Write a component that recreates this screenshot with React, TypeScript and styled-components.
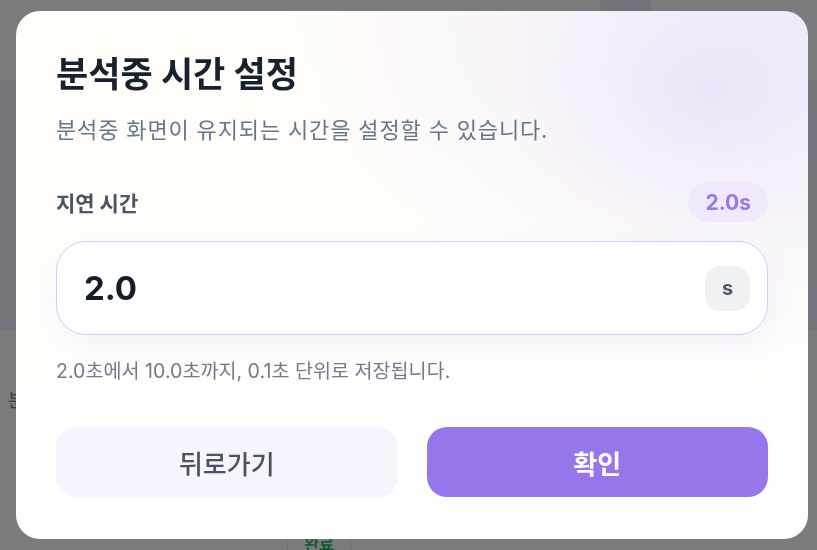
import * as React from 'react'
import styled, { createGlobalStyle } from 'styled-components'

const GlobalStyle = createGlobalStyle`
  html, body {
    margin: 0;
    padding: 0;
    width: 100%;
    height: 100%;
    overflow: hidden;
  }
  body {
    font-family: Inter, "Noto Sans CJK KR", "Noto Sans", sans-serif;
    background: #7b7b7b;
  }
`

// dimmed page behind the dialog
const Page = styled.div`
  display: grid;
  grid-template-rows: 80px 250px 1fr;
  height: 550px;
  width: 817px;
`
const TopBand = styled.div`
  display: grid;
  grid-template-columns: 600px 50px 1fr;
  & > div:nth-child(1) { background: #7b7b7b; }
  & > div:nth-child(2) { background: #747279; }
  & > div:nth-child(3) { background: #7b7b7b; }
`
const MidBand = styled.div`
  background: #76757c;
`
const LowBand = styled.div`
  position: relative;
  background: #7b7b7b;
  padding: 56px 0 0 8px;
  color: #3b3d44;
  font-size: 18px;
`
const StatusCell = styled.div`
  position: absolute;
  left: 287px;
  bottom: -6px;
  width: 62px;
  height: 24px;
  border-left: 1px dashed #6a6a6a;
  border-right: 1px dashed #6a6a6a;
  display: flex;
  justify-content: center;
  color: #0e5e34;
  font-weight: 700;
  font-size: 16px;
  line-height: 24px;
`

const Overlay = styled.div`
  position: fixed;
  inset: 0;
  display: flex;
  align-items: center;
  justify-content: center;
  padding-left: 7px;
`
const Dialog = styled.div`
  box-sizing: border-box;
  width: 792px;
  height: 528px;
  border-radius: 24px;
  padding: 40px 40px 42px;
  display: flex;
  flex-direction: column;
  background:
    radial-gradient(ellipse 200px 150px at 88% 15%, rgba(236, 228, 249, 0.9) 0%, rgba(240, 234, 250, 0.5) 50%, rgba(255, 255, 255, 0) 100%),
    radial-gradient(ellipse 520px 360px at 100% 0%, rgba(240, 233, 249, 1) 0%, rgba(243, 238, 250, 0.7) 45%, rgba(255, 255, 255, 0) 100%),
    linear-gradient(180deg, #fffdf8 0%, #fffefb 60%, #ffffff 100%);
  overflow: hidden;
`
const Title = styled.h1`
  margin: 0;
  font-size: 35px;
  line-height: 46px;
  font-weight: 700;
  color: #182130;
`
const Subtitle = styled.p`
  margin: 18px 0 0;
  font-size: 22px;
  line-height: 30px;
  letter-spacing: 0.85px;
  color: #67778b;
`
const FieldHead = styled.div`
  display: flex;
  justify-content: space-between;
  align-items: center;
  margin-top: 37px;
`
const Label = styled.span`
  font-size: 21px;
  font-weight: 700;
  color: #4a5565;
`
const Badge = styled.span`
  height: 40px;
  padding: 0 17px;
  border-radius: 20px;
  display: flex;
  align-items: center;
  background: #efe9fb;
  color: #9a79e9;
  font-size: 21px;
  font-weight: 700;
`
const InputBox = styled.div`
  box-sizing: border-box;
  margin-top: 19px;
  height: 94px;
  border-radius: 30px;
  border: 1px solid #d5c9f5;
  background: #ffffff;
  box-shadow: 0 12px 30px rgba(150, 119, 235, 0.08);
  display: flex;
  align-items: center;
  justify-content: space-between;
  padding: 0 17px 0 27px;
`
const Value = styled.span`
  font-size: 33px;
  font-weight: 700;
  color: #151d29;
`
const Unit = styled.span`
  width: 45px;
  height: 45px;
  border-radius: 15px;
  background: #f0f1f3;
  color: #4c5665;
  font-size: 20px;
  font-weight: 700;
  display: flex;
  align-items: center;
  justify-content: center;
`
const Hint = styled.p`
  margin: 22px 0 0;
  font-size: 19.6px;
  line-height: 28px;
  color: #707b8d;
`
const Actions = styled.div`
  margin-top: auto;
  display: grid;
  grid-template-columns: 1fr 1fr;
  gap: 29px;
`
const Button = styled.button<{ $primary?: boolean }>`
  height: 70px;
  border: none;
  border-radius: 20px;
  font-family: inherit;
  font-size: 26px;
  font-weight: ${({ $primary }) => ($primary ? 700 : 500)};
  background: ${({ $primary }) => ($primary ? '#9677eb' : '#f6f4fc')};
  color: ${({ $primary }) => ($primary ? '#ffffff' : '#4a5263')};
  cursor: pointer;
`

export default function App() {
  return (
    <>
      <GlobalStyle />
      <Page>
        <TopBand>
          <div />
          <div />
          <div />
        </TopBand>
        <MidBand />
        <LowBand>
          분석
          <StatusCell>완료</StatusCell>
        </LowBand>
      </Page>
      <Overlay>
        <Dialog>
          <Title>분석중 시간 설정</Title>
          <Subtitle>분석중 화면이 유지되는 시간을 설정할 수 있습니다.</Subtitle>
          <FieldHead>
            <Label>지연 시간</Label>
            <Badge>2.0s</Badge>
          </FieldHead>
          <InputBox>
            <Value>2.0</Value>
            <Unit>s</Unit>
          </InputBox>
          <Hint>2.0초에서 10.0초까지, 0.1초 단위로 저장됩니다.</Hint>
          <Actions>
            <Button>뒤로가기</Button>
            <Button $primary>확인</Button>
          </Actions>
        </Dialog>
      </Overlay>
    </>
  )
}
